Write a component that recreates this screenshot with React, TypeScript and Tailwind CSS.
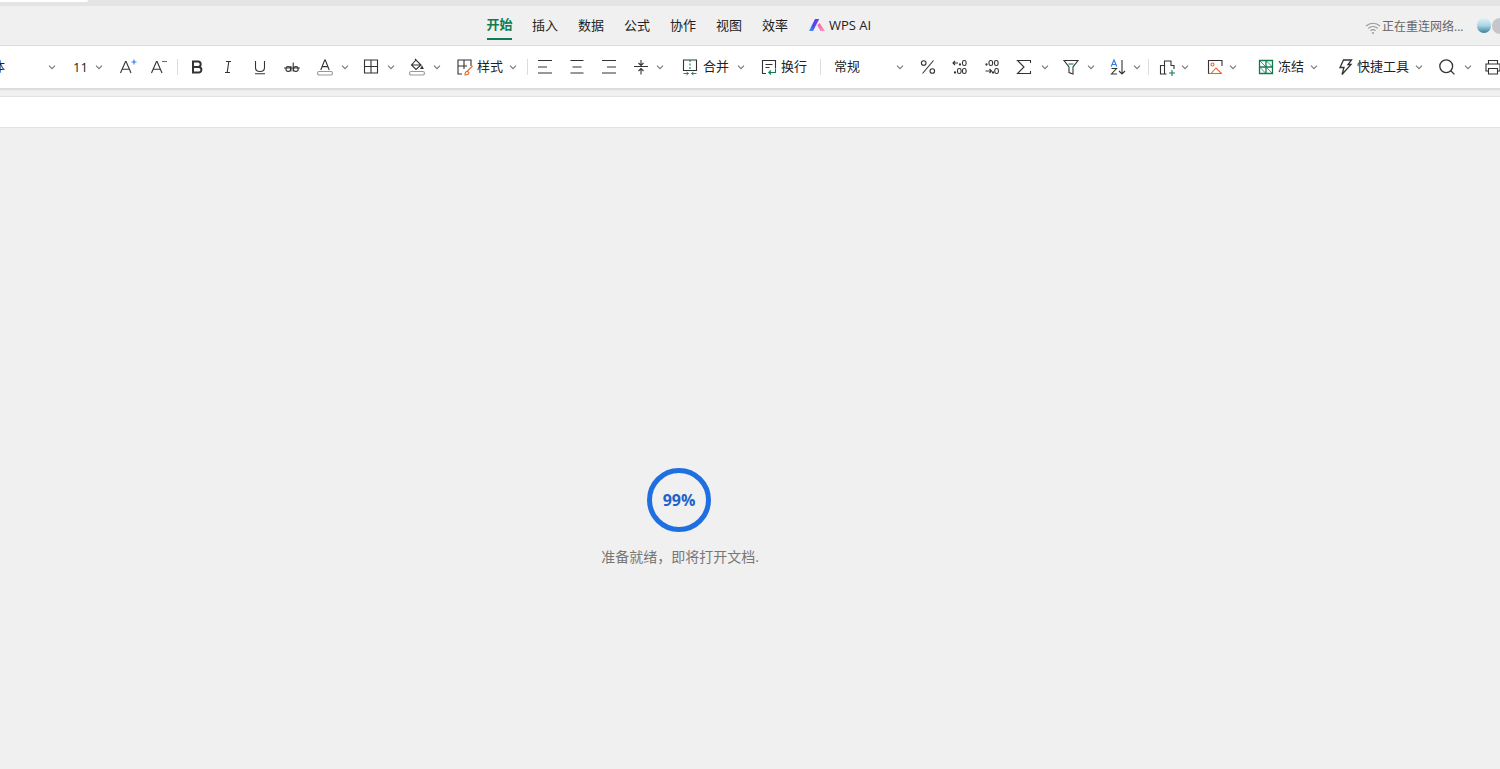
import type { ReactNode } from "react";

const dark = "#333";
const green = "#0f7b52";
const orange = "#e8692c";

function Icon({ className = "", children }: { className?: string; children: ReactNode }) {
  return (
    <svg viewBox="0 0 20 20" fill="none" stroke={dark} strokeWidth={1.1} className={`w-5 h-5 shrink-0 ${className}`}>
      {children}
    </svg>
  );
}

function Chevron({ className = "" }: { className?: string }) {
  return (
    <svg viewBox="0 0 10 10" fill="none" stroke="#777" strokeWidth={1.1} className={`w-[10px] h-[10px] shrink-0 ${className}`}>
      <path d="M2 3.6 5 6.6 8 3.6" />
    </svg>
  );
}

function Sep({ className = "" }: { className?: string }) {
  return <div className={`w-px h-4 bg-[#dcdcdc] shrink-0 ${className}`} />;
}

function Label({ className = "", children }: { className?: string; children: ReactNode }) {
  return <span className={`shrink-0 whitespace-nowrap leading-none pb-[2px] ${className}`}>{children}</span>;
}

const tabs = ["插入", "数据", "公式", "协作", "视图", "效率"];

export default function App() {
  return (
    <div className="h-screen w-full overflow-hidden bg-[#f0f0f0] font-['Open_Sans','Noto_Sans_CJK_SC',sans-serif] text-[13px] text-[#222]">
      <div className="h-[6px] bg-[#e3e4e6]">
        <div className="h-[2px] w-[88px] bg-white rounded-br" />
      </div>

      <div className="h-[39px] flex items-start">
        <div className="ml-[487px] w-[25px] h-[34px] border-b-2 border-[#0f7b52] flex items-center justify-center font-semibold text-[#0f7b52] whitespace-nowrap pt-[6px]">
          开始
        </div>
        {tabs.map((t) => (
          <div key={t} className="ml-5 w-[26px] h-[34px] flex items-center justify-center whitespace-nowrap pt-[6px]">
            {t}
          </div>
        ))}
        <svg viewBox="0 0 16 14" className="ml-[21px] mt-[12px] w-4 h-[14px] shrink-0">
          <defs>
            <linearGradient id="ai" x1="0" y1="1" x2="1" y2="0.4">
              <stop offset="0" stopColor="#35a7ff" />
              <stop offset="0.5" stopColor="#4a4bf0" />
              <stop offset="1" stopColor="#6a3cf0" />
            </linearGradient>
            <linearGradient id="ai2" x1="0" y1="0" x2="1" y2="1">
              <stop offset="0" stopColor="#f25bb0" />
              <stop offset="1" stopColor="#ff9bb8" />
            </linearGradient>
          </defs>
          <path d="M6 1h4.2L4 13H0z" fill="url(#ai)" />
          <path d="M8.3 7.2 10.6 5 16 13h-4.6z" fill="url(#ai2)" />
        </svg>
        <div className="ml-1 w-[42px] h-[34px] flex items-center pt-[6px] whitespace-nowrap">WPS AI</div>

        <svg viewBox="0 0 16 14" fill="none" stroke="#999" strokeWidth={1.1} className="ml-[494px] mt-[15px] w-4 h-[14px] shrink-0">
          <path d="M1 5c4-3.6 10-3.6 14 0M3.2 7.4c2.8-2.4 6.8-2.4 9.6 0M5.4 9.6c1.5-1.2 3.7-1.2 5.2 0" />
          <circle cx="8" cy="12" r="1" fill="#999" stroke="none" />
        </svg>
        <div className="ml-[1px] w-[80px] h-[34px] flex items-center pt-[8px] text-xs text-[#666] whitespace-nowrap">正在重连网络...</div>
        <div className="ml-[15px] mt-[12px] w-[14px] h-[15px] rounded-full shrink-0 bg-gradient-to-b from-[#e4f2f6] via-[#a9d5e4] to-[#37829c]" />
        <div className="ml-px mt-[12px] w-4 h-4 rounded-full shrink-0 bg-[#c4c6ca]" />
      </div>

      <div className="h-[44px] flex items-center bg-white border-y border-[#dcdcdc] shadow-[0_1px_1px_rgba(0,0,0,0.08)]">
        <Label className="ml-[-8px] w-[13px]">体</Label>
        <Chevron className="ml-[42px]" />
        <span className="ml-4 w-[14px] shrink-0 leading-none whitespace-nowrap">11</span>
        <Chevron className="ml-[7px]" />

        <Icon className="ml-[13px]">
          <path d="M3.5 16 8.5 4.5h.6L14 16M5.2 12.2h7.2" />
          <path d="M14.5 5h5M17 2.5v5" stroke="#2a7de1" />
        </Icon>
        <Icon className="ml-[11px]">
          <path d="M3.5 16 8.5 4.5h.6L14 16M5.2 12.2h7.2" />
          <path d="M14 4.5h5" stroke="#2a7de1" />
        </Icon>
        <Sep className="ml-[9px]" />

        <Icon className="ml-[9px]">
          <path d="M6 4.5h5a2.7 2.7 0 0 1 0 5.4H6zM6 9.9h5.6a2.8 2.8 0 0 1 0 5.6H6z" strokeWidth={2} />
        </Icon>
        <Icon className="ml-[11px]">
          <path d="M8 4.5h5M7 15.5h5M10.8 4.5 9.2 15.5" />
        </Icon>
        <Icon className="ml-3">
          <path d="M5.5 4v6.5c0 5.4 9 5.4 9 0V4M5 16.8h10" />
        </Icon>
        <Icon className="ml-3">
          <path d="M2 11h16" strokeWidth={0.9} />
          <circle cx="6.3" cy="12" r="2.4" />
          <path d="M8.9 9v5.6M11.2 5.5v9.1" />
          <circle cx="13.8" cy="12" r="2.4" />
        </Icon>

        <Icon className="ml-[13px]">
          <path d="M5.8 13 9.7 3h.6l3.9 10M7.2 9.6h5.6" />
          <rect x="2.5" y="14.5" width="15" height="3.5" rx="1.7" stroke="#999" />
        </Icon>
        <Chevron className="ml-[5px]" />
        <Icon className="ml-[11px]">
          <path d="M3.5 3h13v13h-13zM10 3v13M3.5 9.5h13" />
        </Icon>
        <Chevron className="ml-[5px]" />
        <Icon className="ml-[11px]">
          <path d="M9 3 4.5 8l4.5 4.5L14 8zM8 2l2 2M5 8h8.5M15 9.5l1 2h-2z" />
          <rect x="2.5" y="14.5" width="15" height="3.5" rx="1.7" stroke="#999" />
        </Icon>
        <Chevron className="ml-[5px]" />

        <Icon className="ml-[13px]">
          <path d="M7 17H3V3h13v6M3 9h9M9 3v9" />
          <path d="M17.5 9 12 14.5M10 18c0-2.5 1-3.8 2.5-3.8l1.5 1.3c0 1.7-1.7 2.5-4 2.5z" stroke={orange} />
        </Icon>
        <Label className="ml-[2px] w-[26px]">样式</Label>
        <Chevron className="ml-[5px]" />
        <Sep className="ml-[9px]" />

        <Icon className="ml-[7px]">
          <path d="M3 3.5h14M3 10h9M3 16h14" />
        </Icon>
        <Icon className="ml-3">
          <path d="M3.5 3.5h13M5.5 10h9M3.5 16h13" />
        </Icon>
        <Icon className="ml-3">
          <path d="M3 3.5h14M8 10h9M3 16h14" />
        </Icon>
        <Icon className="ml-3">
          <path d="M3 9.5h14M10 3v5.5M10 11v6.5M7.5 6l2.5 2.5L12.5 6M7.5 14l2.5-2.5 2.5 2.5" />
        </Icon>
        <Chevron className="ml-1" />

        <Icon className="ml-[15px]">
          <path d="M3.5 3h13v10.5h-13z" />
          <path d="M10 3v10.5" stroke={green} strokeDasharray="2 1.5" />
          <path d="M3.5 16.5h5M6.5 15l2 1.5-2 1.5M16.5 16.5h-5M13.5 15l-2 1.5 2 1.5" stroke={green} strokeWidth={0.9} />
        </Icon>
        <Label className="ml-[3px] w-[26px]">合并</Label>
        <Chevron className="ml-[7px]" />
        <Icon className="ml-[13px]">
          <path d="M7 16.5H3.5v-13h13v8M6.5 7.5h7M6.5 10.5h4" />
          <path d="M16.5 12v3.5h-6.5M12 13.5l-2.2 2 2.2 2" stroke={green} />
        </Icon>
        <Label className="ml-[2px] w-[26px]">换行</Label>
        <Sep className="ml-[13px]" />

        <Label className="ml-[13px] w-[26px]">常规</Label>
        <Chevron className="ml-[35px]" />
        <Icon className="ml-[13px]">
          <path d="M15.5 3.5 4.5 16.5" />
          <circle cx="5.7" cy="6" r="2.3" />
          <circle cx="14.3" cy="14" r="2.3" />
        </Icon>
        <Icon className="ml-3">
          <path d="M8 6H3M5 4 3 6l2 2" />
          <circle cx="10" cy="7.5" r=".6" fill={dark} />
          <rect x="12.5" y="3.5" width="3.6" height="5" rx="1.8" />
          <circle cx="5" cy="15.5" r=".6" fill={dark} />
          <rect x="7.5" y="11.5" width="3.6" height="5" rx="1.8" />
          <rect x="12.5" y="11.5" width="3.6" height="5" rx="1.8" />
        </Icon>
        <Icon className="ml-3">
          <circle cx="4.5" cy="7.5" r=".6" fill={dark} />
          <rect x="7" y="3.5" width="3.6" height="5" rx="1.8" />
          <rect x="12.5" y="3.5" width="3.6" height="5" rx="1.8" />
          <path d="M3.5 14h6M7.5 12l2 2-2 2" />
          <circle cx="11" cy="15.5" r=".6" fill={dark} />
          <rect x="12.8" y="11.5" width="3.6" height="5" rx="1.8" />
        </Icon>
        <Icon className="ml-3">
          <path d="M16.5 6V3.5H3.5L10 10l-6.5 6.5h13V14" />
        </Icon>
        <Chevron className="ml-[6px]" />
        <Icon className="ml-[11px]">
          <path d="M3 3.5h14l-5 6.5v7l-4-1.5V10z" />
          <path d="M7.5 7h5" stroke={green} />
        </Icon>
        <Chevron className="ml-[5px]" />
        <Icon className="ml-3">
          <path d="M3.2 9.5 6 3l2.8 6.5M4.2 7.5h3.6" stroke="#2a7de1" />
          <path d="M3.5 11.5h5l-5 5.5h5.5M14 3v14M11 14l3 3 3-3" />
        </Icon>
        <Chevron className="ml-1" />
        <Sep className="ml-[6px]" />

        <Icon className="ml-2">
          <path d="M9.5 17h-6V8.5h4M7.5 17V4h6.5v4.5h3V12" />
          <path d="M15 13v6M12 16h6" stroke={green} />
        </Icon>
        <Chevron className="ml-[3px]" />
        <Icon className="ml-[15px]">
          <path d="M17 9V3.5H3.5v13H5" />
          <path d="M3.5 16.5h13.5" stroke={orange} />
          <path d="M6 16.5l5-5.5 5.5 5.5" stroke={orange} />
          <circle cx="7.5" cy="7.5" r="1.5" stroke={orange} />
        </Icon>
        <Chevron className="ml-[3px]" />

        <Icon className="ml-[18px]">
          <path d="M3.5 3.5h13v13h-13zM10 3.5v13M3.5 10h13" stroke={green} strokeWidth={1.3} />
          <path d="M3.5 3.5 10 10M10 10l6.5 6.5M3.5 10l6.5 6.5M10 3.5l6.5 6.5" stroke={green} strokeWidth={0.8} />
        </Icon>
        <Label className="ml-[2px] w-[26px]">冻结</Label>
        <Chevron className="ml-[5px]" />
        <Icon className="ml-4">
          <path d="M8.5 3h8l-3.5 4.5h3L7 17.5l2-7H5z" strokeWidth={1.3} />
        </Icon>
        <Label className="ml-[2px] w-[52px]">快捷工具</Label>
        <Chevron className="ml-[5px]" />
        <Icon className="ml-[13px]">
          <circle cx="9.2" cy="9.2" r="6.4" strokeWidth={1.3} />
          <path d="m13.8 13.8 3.6 3.6" strokeWidth={1.3} />
        </Icon>
        <Chevron className="ml-[6px]" />
        <Icon className="ml-[10px]">
          <path d="M5.5 7V3.5h9V7M5.5 14H3V7h14v7h-2.5M5.5 11.5h9v5.5h-9z" />
        </Icon>
      </div>

      <div className="mt-[7px] h-[32px] bg-white border-y border-[#e2e2e2]" />

      <div className="w-[1358px] pt-[340px] flex flex-col items-center">
        <div className="w-16 h-16 rounded-full border-[5px] border-[#1f6fe0] flex items-center justify-center text-base font-bold text-[#1f62c9] leading-none">
          99%
        </div>
        <p className="mt-4 ml-[2px] text-sm leading-[18px] text-[#777] whitespace-nowrap">准备就绪，即将打开文档.</p>
      </div>
    </div>
  );
}
